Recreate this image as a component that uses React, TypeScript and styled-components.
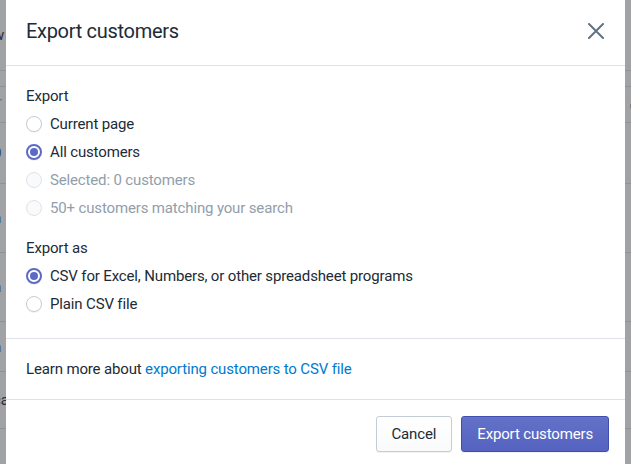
import { createGlobalStyle, styled } from "styled-components";

const GlobalStyle = createGlobalStyle`
  html, body {
    margin: 0;
    padding: 0;
    height: 100%;
    overflow: hidden;
  }
  body {
    font-family: Roboto, "Noto Sans", sans-serif;
    color: #212b36;
    letter-spacing: -0.15px;
    -webkit-font-smoothing: antialiased;
  }
`;

// dimmed page under the modal
const Page = styled.div`
  height: 464px;
  background: #a0a2a6;
  display: flex;
  flex-direction: column;
  overflow: hidden;
`;

interface PageRowPropsType {
  height: number;
  muted?: boolean;
}

const PageRow = styled.div<PageRowPropsType>`
  box-sizing: border-box;
  flex: none;
  height: ${(props) => props.height}px;
  border-bottom: 1px solid #909296;
  display: flex;
  align-items: center;
  justify-content: space-between;
  font-size: 15px;
  color: ${(props) => (props.muted ? "#6d6f73" : "#2b2d31")};
  margin: 0 -7px;
`;

const Overlay = styled.div`
  position: fixed;
  top: 0;
  left: 6px;
  right: 6px;
  bottom: -10px;
  background: #fff;
  display: flex;
  flex-direction: column;
`;

const Header = styled.div`
  box-sizing: border-box;
  height: 66px;
  border-bottom: 1px solid #dfe3e8;
  display: flex;
  align-items: center;
  justify-content: space-between;
  padding: 0 20px 3px;
`;

const Title = styled.h2`
  margin: 0;
  font-size: 20px;
  font-weight: 400;
  line-height: 28px;
  letter-spacing: -0.3px;
  color: #212b36;
`;

const CloseButton = styled.button`
  border: 0;
  background: none;
  padding: 0;
  width: 24px;
  height: 24px;
  margin-right: -3px;
  display: flex;
  align-items: center;
  justify-content: center;
  cursor: pointer;
`;

interface SectionPropsType {
  bottom?: number;
}

const Section = styled.div<SectionPropsType>`
  padding: 20px 20px ${(props) => props.bottom ?? 20}px;
  border-bottom: 1px solid #dfe3e8;
  display: flex;
  flex-direction: column;
`;

const Group = styled.div`
  display: flex;
  flex-direction: column;
  gap: 8px;
  & + & {
    margin-top: 20px;
  }
`;

const GroupLabel = styled.div`
  font-size: 15px;
  line-height: 20px;
`;

interface ChoicePropsType {
  disabled?: boolean;
}

const Choice = styled.label<ChoicePropsType>`
  display: flex;
  align-items: center;
  gap: 8px;
  font-size: 15px;
  line-height: 20px;
  color: ${(props) => (props.disabled ? "#919eab" : "#212b36")};
  cursor: ${(props) => (props.disabled ? "default" : "pointer")};
`;

interface RadioPropsType {
  checked?: boolean;
  disabled?: boolean;
}

const Radio = styled.span<RadioPropsType>`
  box-sizing: border-box;
  width: 16px;
  height: 16px;
  border-radius: 50%;
  flex: none;
  border: ${(props) =>
    props.checked
      ? "2px solid #5c6ac4"
      : props.disabled
      ? "1px solid #dfe3e8"
      : "1px solid #c4cdd5"};
  background: ${(props) => (props.disabled ? "#f9fafb" : "#fff")};
  box-shadow: ${(props) =>
    props.disabled ? "none" : "0 1px 0 rgba(22, 29, 37, 0.05)"};
  display: flex;
  align-items: center;
  justify-content: center;
  &::after {
    content: "";
    display: ${(props) => (props.checked ? "block" : "none")};
    width: 8px;
    height: 8px;
    border-radius: 50%;
    background: #5c6ac4;
  }
`;

const Text = styled.p`
  margin: 0;
  font-size: 15px;
  line-height: 20px;
`;

const Link = styled.a`
  color: #007ace;
  text-decoration: none;
`;

const Footer = styled.div`
  display: flex;
  justify-content: flex-end;
  gap: 9px;
  padding: 16px;
`;

interface ButtonPropsType {
  primary?: boolean;
}

const Button = styled.button<ButtonPropsType>`
  height: 36px;
  padding: 0 15px;
  border-radius: 3px;
  font-family: inherit;
  font-size: 15px;
  letter-spacing: inherit;
  cursor: pointer;
  color: ${(props) => (props.primary ? "#fff" : "#212b36")};
  border: 1px solid ${(props) => (props.primary ? "#3f4eae" : "#c4cdd5")};
  background: ${(props) =>
    props.primary
      ? "linear-gradient(180deg, #6371c7, #5563c1)"
      : "linear-gradient(180deg, #fff, #f9fafb)"};
  box-shadow: ${(props) =>
    props.primary
      ? "inset 0 1px 0 0 #6774c8, 0 1px 0 0 rgba(22, 29, 37, 0.05)"
      : "0 1px 0 0 rgba(22, 29, 37, 0.05)"};
`;

const pageRows = [
  { height: 71, left: "w", right: "l", muted: false },
  { height: 16, left: "", right: "", muted: false },
  { height: 36, left: "T", right: "o", muted: true },
  { height: 61, left: "0", right: "", muted: false },
  { height: 69, left: "n", right: "", muted: false },
  { height: 69, left: "n", right: "", muted: false },
  { height: 50, left: "n", right: "", muted: false },
  { height: 57, left: "ca", right: "", muted: false },
  { height: 40, left: "", right: "", muted: false },
];

const exportOptions = [
  { label: "Current page", checked: false, disabled: false },
  { label: "All customers", checked: true, disabled: false },
  { label: "Selected: 0 customers", checked: false, disabled: true },
  { label: "50+ customers matching your search", checked: false, disabled: true },
];

const formatOptions = [
  { label: "CSV for Excel, Numbers, or other spreadsheet programs", checked: true },
  { label: "Plain CSV file", checked: false },
];

export default function App() {
  return (
    <>
      <GlobalStyle />
      <Page>
        {pageRows.map((row, i) => (
          <PageRow key={i} height={row.height} muted={row.muted}>
            <span>{row.left}</span>
            <span>{row.right}</span>
          </PageRow>
        ))}
      </Page>
      <Overlay>
        <Header>
          <Title>Export customers</Title>
          <CloseButton aria-label="Close">
            <svg width="16" height="16" viewBox="0 0 16 16">
              <path
                d="M1 1 L15 15 M15 1 L1 15"
                stroke="#637381"
                strokeWidth="2"
                strokeLinecap="round"
              />
            </svg>
          </CloseButton>
        </Header>
        <Section bottom={24}>
          <Group>
            <GroupLabel>Export</GroupLabel>
            {exportOptions.map((opt) => (
              <Choice key={opt.label} disabled={opt.disabled}>
                <Radio checked={opt.checked} disabled={opt.disabled} />
                {opt.label}
              </Choice>
            ))}
          </Group>
          <Group>
            <GroupLabel>Export as</GroupLabel>
            {formatOptions.map((opt) => (
              <Choice key={opt.label}>
                <Radio checked={opt.checked} />
                {opt.label}
              </Choice>
            ))}
          </Group>
        </Section>
        <Section>
          <Text>
            Learn more about <Link href="#">exporting customers to CSV file</Link>
          </Text>
        </Section>
        <Footer>
          <Button>Cancel</Button>
          <Button primary>Export customers</Button>
        </Footer>
      </Overlay>
    </>
  );
}
